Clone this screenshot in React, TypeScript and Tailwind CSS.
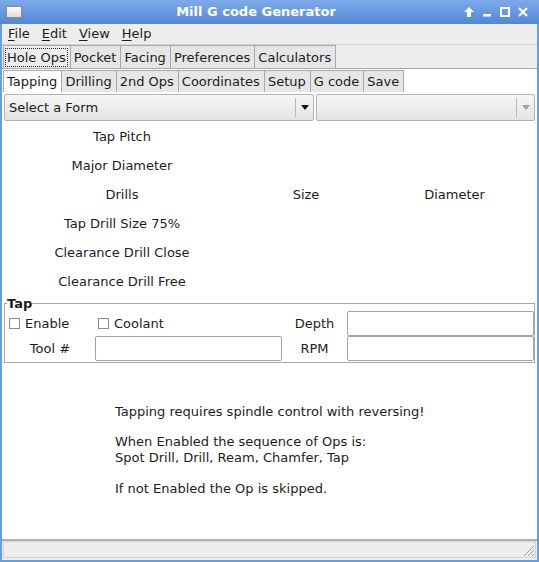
import React from 'react';

const topTabs = ['Hole Ops', 'Pocket', 'Facing', 'Preferences', 'Calculators'];
const subTabs = ['Tapping', 'Drilling', '2nd Ops', 'Coordinates', 'Setup', 'G code', 'Save'];
const rows = ['Tap Pitch', 'Major Diameter', 'Drills', 'Tap Drill Size 75%', 'Clearance Drill Close', 'Clearance Drill Free'];

function Check({ label }: { label: string }) {
  return (
    <div className="flex items-center gap-[5px]">
      <span className="w-[11px] h-[11px] border border-[#8c8c8c] bg-white" />
      <span>{label}</span>
    </div>
  );
}

function Combo({ className, disabled }: { className: string; disabled?: boolean }) {
  return (
    <div className={`h-[27px] flex items-center border border-[#b4b4b4] rounded-[2px] bg-gradient-to-b from-[#f6f6f6] to-[#e4e4e4] ${className}`}>
      <span className="flex-1 pl-[4px]">{disabled ? '' : 'Select a Form'}</span>
      <span className="w-px h-[19px] bg-[#b8b8b8]" />
      <span className="w-[17px] flex justify-center">
        <svg width="8" height="5" viewBox="0 0 8 5">
          <path d="M0 0h8L4 5z" fill={disabled ? '#a0a0a0' : '#111'} />
        </svg>
      </span>
    </div>
  );
}

export default function App() {
  return (
    <div className="w-[539px] h-[562px] flex flex-col bg-[#6b9be0] font-['DejaVu_Sans',sans-serif] text-[13px] text-[#1c1c1c] overflow-hidden">
      {/* title bar */}
      <div className="h-[24px] flex items-center bg-gradient-to-b from-[#7eaaea] to-[#5287d6] text-white">
        <div className="ml-[6px] w-[16px] h-[12px] border border-[#8a8a8a] bg-gradient-to-b from-white to-[#dcdcdc]" />
        <div className="flex-1 text-center font-bold text-[13px] pl-[26px]">Mill G code Generator</div>
        <div className="flex items-center gap-[8px] mr-[11px]">
          <svg width="10" height="10" viewBox="0 0 10 10"><path d="M5 0L10 5H7v5H3V5H0z" fill="white" /></svg>
          <svg width="10" height="10" viewBox="0 0 10 10"><rect x="1" y="7" width="8" height="2.5" fill="white" /></svg>
          <svg width="10" height="10" viewBox="0 0 10 10"><rect x="1" y="1" width="8" height="8" fill="none" stroke="white" strokeWidth="2" /></svg>
          <svg width="10" height="10" viewBox="0 0 10 10"><path d="M1 1L9 9M9 1L1 9" stroke="white" strokeWidth="2.2" /></svg>
        </div>
      </div>

      <div className="flex-1 flex flex-col mx-[2px] mb-[2px] bg-[#ededed]">
        {/* menu */}
        <div className="h-[21px] flex items-center gap-[12px] pl-[6px] border-b border-[#d2d2d2] bg-[#ededed]">
          {['File', 'Edit', 'View', 'Help'].map((m) => (
            <span key={m}>
              <span className="underline underline-offset-2">{m[0]}</span>
              {m.slice(1)}
            </span>
          ))}
        </div>

        {/* top tabs */}
        <div className="h-[23px] flex items-end pl-[1px] bg-[#ededed]">
          {topTabs.map((t, i) => (
            <div
              key={t}
              className={`h-[23px] flex items-center border border-b-0 border-[#a8a8a8] -mr-px ${i === 0 ? 'bg-[#ededed] pl-[2px] pr-[3px]' : 'bg-[#e6e6e6] pl-[3px] pr-[4px]'}`}
            >
              <span className={`leading-[17px] ${i === 0 ? 'px-px outline outline-1 outline-dotted outline-[#222]' : ''}`}>{t}</span>
            </div>
          ))}
        </div>

        {/* panel */}
        <div className="flex-1 flex flex-col border-t border-[#a8a8a8] bg-white">
          <div className="h-[23px] flex items-end pl-[1px] pt-[1px]">
            {subTabs.map((t, i) => (
              <div
                key={t}
                className={`h-[22px] flex items-center pl-[3px] pr-[4px] border border-b-0 border-[#a8a8a8] -mr-px ${i === 0 ? 'bg-white' : 'bg-[#e6e6e6] border-b'}`}
              >
                {t}
              </div>
            ))}
          </div>

          <div className="flex gap-[2px] pl-[2px] pr-[2px] pt-[2px]">
            <Combo className="w-[310px]" />
            <Combo className="flex-1" disabled />
          </div>

          <div className="grid grid-cols-[236px_132px_1fr] pl-[2px] mt-[1px]">
            {rows.map((r) => (
              <React.Fragment key={r}>
                <div className="h-[29px] flex items-center justify-center">{r}</div>
                <div className="h-[29px] flex items-center justify-center">{r === 'Drills' ? 'Size' : ''}</div>
                <div className="h-[29px] flex items-center justify-center">{r === 'Drills' ? 'Diameter' : ''}</div>
              </React.Fragment>
            ))}
          </div>

          <fieldset className="mx-[2px] border border-[#a8a8a8] pb-px">
            <legend className="ml-[2px] font-bold leading-[15px] px-0">Tap</legend>
            <div className="grid grid-cols-[90px_187px_65px_187px] grid-rows-[25px_25px]">
              <div className="flex items-center pl-[4px]"><Check label="Enable" /></div>
              <div className="flex items-center pl-[3px]"><Check label="Coolant" /></div>
              <div className="flex items-center justify-center">Depth</div>
              <input className="border border-[#a4a4a4] rounded-[2px] bg-white h-[25px]" />
              <div className="flex items-center justify-center">Tool #</div>
              <input className="border border-[#a4a4a4] rounded-[2px] bg-white h-[25px]" />
              <div className="flex items-center justify-center">RPM</div>
              <input className="border border-[#a4a4a4] rounded-[2px] bg-white h-[25px]" />
            </div>
          </fieldset>

          <div className="pl-[113px] mt-[41px] leading-[16px]">
            <p>Tapping requires spindle control with reversing!</p>
            <p className="mt-[14px]">When Enabled the sequence of Ops is:</p>
            <p>Spot Drill, Drill, Ream, Chamfer, Tap</p>
            <p className="mt-[15px]">If not Enabled the Op is skipped.</p>
          </div>
          <div className="flex-1" />
        </div>

        {/* status bar */}
        <div className="h-[21px] flex items-stretch border-t-2 border-[#b0b0b0] bg-[#ededed] px-[1px] pb-[2px]">
          <div className="flex-1 border border-[#d4d4d4] bg-[#eeeeec] flex justify-end items-end">
            <svg width="14" height="14" viewBox="0 0 14 14">
              <path d="M13 3L3 13M13 7L7 13M13 11L11 13" stroke="#9a9a9a" strokeWidth="1" />
            </svg>
          </div>
        </div>
      </div>
    </div>
  );
}
